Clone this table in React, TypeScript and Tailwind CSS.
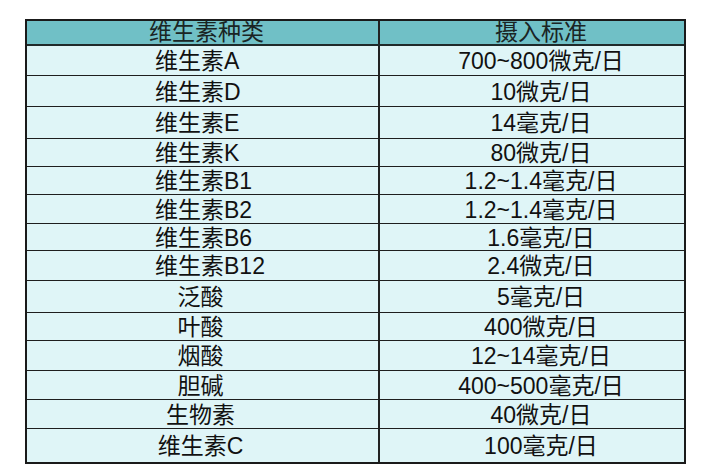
const rows = [
  { name: '维生素A', amount: '700~800微克/日', h: 'h-[30px]', left: true },
  { name: '维生素D', amount: '10微克/日', h: 'h-[31px]', left: true },
  { name: '维生素E', amount: '14毫克/日', h: 'h-[32px]', left: true },
  { name: '维生素K', amount: '80微克/日', h: 'h-[28px]', left: true },
  { name: '维生素B1', amount: '1.2~1.4毫克/日', h: 'h-[28px]', left: true },
  { name: '维生素B2', amount: '1.2~1.4毫克/日', h: 'h-[29px]', left: true },
  { name: '维生素B6', amount: '1.6毫克/日', h: 'h-[27px]', left: true },
  { name: '维生素B12', amount: '2.4微克/日', h: 'h-[30px]', left: true },
  { name: '泛酸', amount: '5毫克/日', h: 'h-[32px]', left: false },
  { name: '叶酸', amount: '400微克/日', h: 'h-[28px]', left: false },
  { name: '烟酸', amount: '12~14毫克/日', h: 'h-[30px]', left: false },
  { name: '胆碱', amount: '400~500毫克/日', h: 'h-[29px]', left: false },
  { name: '生物素', amount: '40微克/日', h: 'h-[29px]', left: false },
  { name: '维生素C', amount: '100毫克/日', h: 'h-[33px]', left: false },
];

export default function App() {
  return (
    <div
      className="w-[713px] h-[475px] bg-white pt-[19px] pl-[25px] text-[#111] text-[23px] leading-none"
      style={{ fontFamily: '"Liberation Sans", "Noto Sans CJK SC", sans-serif' }}
    >
      <div className="w-[661px] border-2 border-[#1a1a1a] bg-[#dff5f7]">
        {/* header */}
        <div className="flex h-[25px] bg-[#70c0c6] border-b-2 border-[#1f2a2a] text-[#1a2424]">
          <div className="w-[351px] flex items-center justify-center pl-[8px]">维生素种类</div>
          <div className="flex-1 flex items-center justify-center border-l-2 border-[#222] pl-[18px]">摄入标准</div>
        </div>
        {rows.map((r, i) => (
          <div
            key={r.name}
            className={`flex ${r.h} ${i < rows.length - 1 ? 'border-b border-[#1e1e1e]' : ''}`}
          >
            <div
              className={`w-[351px] flex items-center whitespace-nowrap pt-[2px] ${
                r.left ? 'justify-start pl-[128px]' : 'justify-center pr-[4px]'
              }`}
            >
              {r.name}
            </div>
            <div className="flex-1 flex items-center justify-center border-l-2 border-[#222] pl-[18px] pt-[2px] whitespace-nowrap">
              {r.amount}
            </div>
          </div>
        ))}
      </div>
    </div>
  );
}
